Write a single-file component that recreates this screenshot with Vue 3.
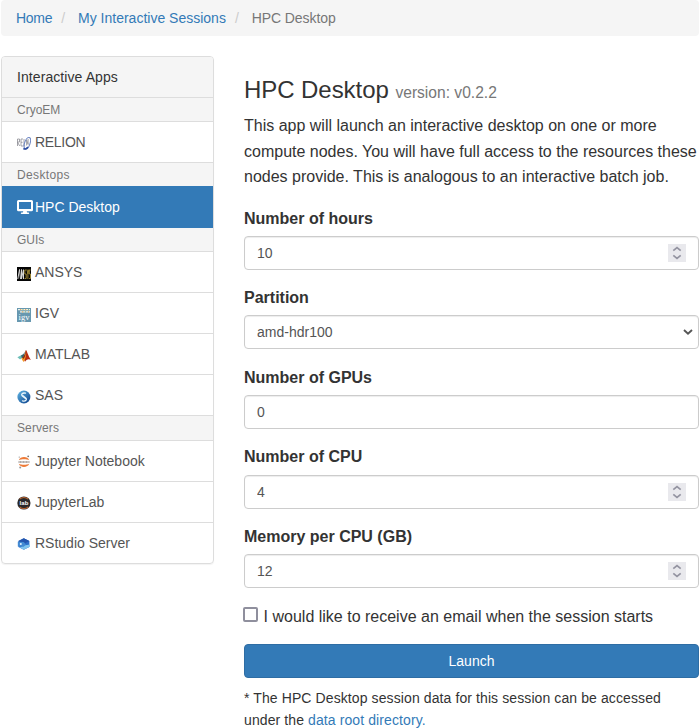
<script setup>
import { ref } from 'vue'

const groups = [
  { name: 'CryoEM', items: [{ id: 'relion', label: 'RELION' }] },
  { name: 'Desktops', items: [{ id: 'desktop', label: 'HPC Desktop', active: true }] },
  {
    name: 'GUIs',
    items: [
      { id: 'ansys', label: 'ANSYS' },
      { id: 'igv', label: 'IGV' },
      { id: 'matlab', label: 'MATLAB' },
      { id: 'sas', label: 'SAS' }
    ]
  },
  {
    name: 'Servers',
    items: [
      { id: 'jupyter', label: 'Jupyter Notebook' },
      { id: 'lab', label: 'JupyterLab' },
      { id: 'rstudio', label: 'RStudio Server' }
    ]
  }
]

const fields = ref([
  { id: 'hours', label: 'Number of hours', value: '10', control: 'spin' },
  { id: 'partition', label: 'Partition', value: 'amd-hdr100', control: 'select' },
  { id: 'gpus', label: 'Number of GPUs', value: '0', control: 'plain' },
  { id: 'cpus', label: 'Number of CPU', value: '4', control: 'spin' },
  { id: 'memory', label: 'Memory per CPU (GB)', value: '12', control: 'spin' }
])
const notify = ref(false)
</script>

<template>
  <div class="page">
    <ol class="breadcrumb">
      <li><a href="#">Home</a></li>
      <li><a href="#">My Interactive Sessions</a></li>
      <li class="current">HPC Desktop</li>
    </ol>

    <div class="columns">
      <nav class="sidebar">
        <div class="title">Interactive Apps</div>
        <template v-for="group in groups" :key="group.name">
          <p class="group" :class="group.name.toLowerCase()">{{ group.name }}</p>
          <a v-for="item in group.items" :key="item.id" href="#" class="item" :class="[item.id, { active: item.active }]">
            <svg v-if="item.id === 'relion'" class="icon raised" viewBox="0 0 14 14">
              <g fill="none" stroke="#8d8d94" stroke-width=".8">
                <path d="M.5 10V3h2v3H.5l2.200 4M4 3v7h2M4 6.300h1.600M4 3h2M7 3v7h1.200" />
                <path d="M9.600 9.500V4l1.500 4.500V3" />
              </g>
              <ellipse cx="10.300" cy="7.200" rx="2.700" ry="6" transform="rotate(19 10.300 7.200)" fill="none" stroke="#7189c4" stroke-width="1.100" />
              <path d="M6.500 12.400c1.200 1.200 3 .6 4.400-1.400" fill="none" stroke="#2b4ba0" stroke-width="1.600" />
            </svg>
            <svg v-else-if="item.id === 'desktop'" class="icon monitor" viewBox="0 0 16 14">
              <path fill="#fff" fill-rule="evenodd" d="M1.500 0h13Q16 0 16 1.500v8.200Q16 11.200 14.500 11.200H9.700l.5 1.300h1.300q.7 0 .7.750t-.7.750H4.500q-.7 0-.7-.750t.7-.750h1.300l.5-1.300H1.500Q0 11.200 0 9.700V1.500Q0 0 1.500 0zM2 2v7h12V2z" />
            </svg>
            <svg v-else-if="item.id === 'ansys'" class="icon" viewBox="0 0 14 14">
              <path fill="#050505" d="M0 0h14v14H0z" />
              <path d="M.8 12 2.500 2.500 3.500 12M4.500 12V2.500L6.500 12V2.500" fill="none" stroke="#d6d6d6" stroke-width="1" />
              <path d="M9.300 3H7.800v4h1.400v4.500H7.600M10 2.500l.9 4.500v5M11.800 2.500 11 7M13.500 3h-1.200v4h1.200v4.500h-1.400" fill="none" stroke="#a89035" stroke-width=".9" />
            </svg>
            <svg v-else-if="item.id === 'igv'" class="icon" viewBox="0 0 14 14">
              <path fill="#6798b0" d="M0 0h14v14H0z" />
              <path fill="#eef1e9" d="M1 1h12v1.300H1zM3 3.300h10v1.300H3z" />
              <path fill="#e4ad69" d="M3 1h1.200v1.300H3zM8 1h1.200v1.300H8zM5 3.300h1.200v1.300H5zM11 3.300h1v1.300h-1z" />
              <path fill="#87b58b" d="M5.500 1h1v1.300h-1zM11 1h1v1.300h-1zM8 3.300h1v1.300H8z" />
              <text x="1.500" y="11.500" font-family="Liberation Serif, serif" font-size="8.500" fill="#fff" textLength="11">igv</text>
            </svg>
            <svg v-else-if="item.id === 'matlab'" class="icon" viewBox="0 0 14 14">
              <path fill="#6dbeb8" d="m.4 8.300 3.700-2 2 1.300-3 2.800z" />
              <path fill="#37656c" d="m4.100 6.300 2.100-1.100L8 2.800 6.800 8 5 10z" />
              <path fill="#b82b12" d="M9 1c1.100 1 2 5.500 4.900 10-2-1.200-3.800-1-5.900 1.700L6.200 9C8 7.500 8.100 3 9 1z" />
              <path fill="#f39a24" d="M9 1.500C9.500 6 8.700 10 6.500 13L4.300 9.500C7.500 8.500 7.900 4.500 9 1.500z" />
              <path fill="#8c2a17" d="M9 1c-.8 2-1.100 6-3.600 7.500l1 1.400C8.500 8 8.800 4.500 9 1z" />
            </svg>
            <svg v-else-if="item.id === 'sas'" class="icon" viewBox="0 0 14 14">
              <defs>
                <linearGradient id="sas-fill" x1="0" y1="0" x2="1" y2="1">
                  <stop offset="0" stop-color="#62b8e6" />
                  <stop offset="1" stop-color="#083c87" />
                </linearGradient>
              </defs>
              <circle cx="6.900" cy="7" r="6.500" fill="url(#sas-fill)" />
              <path d="M8.500 3.200C5.400 2.400 3.700 4.500 5.300 6l2.900 2.200M5.500 10.800c3.200.9 4.900-1.400 3.200-2.900L6 5.800" fill="none" stroke="#e8f5fc" stroke-width="1.300" stroke-linecap="round" />
            </svg>
            <svg v-else-if="item.id === 'jupyter'" class="icon raised" viewBox="0 0 14 14">
              <path fill="#ee7b38" d="M1.800 5.200C3.100 1 10.900 1 12.200 5.200 9.600 3.900 4.400 3.900 1.800 5.200zM1.800 8.800c1.300 4.200 9.100 4.200 10.400 0-2.600 1.300-7.800 1.300-10.400 0z" />
              <path d="M1.500 7h11" stroke="#96908d" stroke-width="1.500" stroke-dasharray="1.200 .3" />
              <circle cx="11.200" cy="1.300" r=".9" fill="#777" />
              <circle cx="2.200" cy="2.100" r=".6" fill="#888" />
              <circle cx="3.200" cy="12.600" r="1" fill="#999" />
            </svg>
            <svg v-else-if="item.id === 'lab'" class="icon raised" viewBox="0 0 14 14">
              <circle cx="6.900" cy="7" r="6.600" fill="#29292b" />
              <path d="M2.600 3.200c2.300-2.300 6.300-2.300 8.600 0M2.600 10.800c2.300 2.300 6.300 2.300 8.600 0" fill="none" stroke="#bb642f" stroke-width="1.100" />
              <text x="2.400" y="9.100" font-family="Liberation Sans, sans-serif" font-size="6" font-weight="bold" fill="#fff" textLength="9">lab</text>
            </svg>
            <svg v-else class="icon raised" viewBox="0 0 14 14">
              <path fill="#2d6fca" d="m6.800 1.200 5.600 2.900v5.800l-5.600 2.900-5.400-2.900V4.100z" />
              <path fill="#2455ad" d="m6.800 1.200 5.600 2.900-5.600 2.900-5.400-2.900z" />
              <path fill="#80c5ee" d="m6.800 8.500 6.200-1v2l-6.200 3.300-4-2.300z" />
              <path fill="#438bd3" d="M.8 4.700 6.800 5l2 2.500-2 2.300-6-.3z" />
              <circle cx="3.800" cy="7" r="1" fill="#e9f6ff" />
            </svg>
            <span>{{ item.label }}</span>
          </a>
        </template>
      </nav>

      <main class="content">
        <h3><span>HPC Desktop</span> <small>version: v0.2.2</small></h3>
        <p class="intro">
          This app will launch an interactive desktop on one or more compute nodes. You will have full access to the
          resources these nodes provide. This is analogous to an interactive batch job.
        </p>
        <form @submit.prevent>
          <div v-for="field in fields" :key="field.id" class="field">
            <label :for="field.id">{{ field.label }}</label>
            <div class="control">
              <select v-if="field.control === 'select'" :id="field.id" v-model="field.value">
                <option>amd-hdr100</option>
              </select>
              <input v-else :id="field.id" v-model="field.value" type="text" />
              <span v-if="field.control === 'spin'" class="spinner">
                <svg viewBox="0 0 18 18">
                  <path d="M5.300 6.700 9 3.700l3.700 3M5.300 11.300l3.700 3 3.700-3" fill="none" stroke="#9494a1" stroke-width="1.700" />
                </svg>
              </span>
              <svg v-if="field.control === 'select'" class="chevron" viewBox="0 0 10 6">
                <path d="m1 1 4 3.700L9 1" fill="none" stroke="#555" stroke-width="1.900" />
              </svg>
            </div>
          </div>
          <label class="check">
            <input v-model="notify" type="checkbox" />
            <span>I would like to receive an email when the session starts</span>
          </label>
          <button type="submit">Launch</button>
        </form>
        <p class="note">
          * The HPC Desktop session data for this session can be accessed under the <a href="#">data root directory.</a>
        </p>
      </main>
    </div>
  </div>
</template>

<style>
body {
  margin: 0;
  background: #fff;
  overflow: hidden;
}
</style>

<style scoped>
* {
  box-sizing: border-box;
}
.page {
  padding-left: 1px;
  font: 16px/1.6 "Liberation Sans", Arial, sans-serif;
  color: #333;
}
a {
  color: #337ab7;
  text-decoration: none;
}
.breadcrumb {
  display: flex;
  height: 36px;
  margin: 0 0 20px;
  padding: 7px 15px;
  list-style: none;
  background: #f5f5f5;
  border-radius: 4px;
  font-size: 14px;
  line-height: 22px;
}
.breadcrumb li:first-child {
  letter-spacing: -0.3px;
}
.breadcrumb li + li::before {
  content: "/";
  padding: 0 13px 0 9px;
  color: #ccc;
}
.breadcrumb .current {
  color: #777;
  letter-spacing: -0.08px;
}
.columns {
  display: flex;
  align-items: flex-start;
  gap: 30px;
}
.sidebar {
  width: 213px;
  flex: none;
  border: 1px solid #ddd;
  border-radius: 4px;
  box-shadow: 0 1px 1px rgba(0, 0, 0, 0.05);
  overflow: hidden;
  font-size: 14px;
}
.title {
  height: 41px;
  padding-left: 15px;
  line-height: 40px;
  letter-spacing: 0.08px;
  background: #f5f5f5;
  border-bottom: 1px solid #ddd;
}
.group {
  height: 24px;
  margin: 0;
  padding-left: 15px;
  font-size: 12px;
  line-height: 25px;
  color: #777;
  background: #f5f5f5;
  border-bottom: 1px solid #ddd;
}
.group.desktops {
  letter-spacing: 0.35px;
}
.group.servers {
  height: 25px;
  letter-spacing: 0.1px;
}
.item {
  display: flex;
  align-items: center;
  height: 41px;
  padding: 0 15px 1px;
  line-height: 22px;
  color: #555;
  border-bottom: 1px solid #ddd;
}
.item.relion {
  letter-spacing: -0.3px;
}
.item:last-child {
  height: 40px;
  border-bottom: 0;
}
.item.active {
  height: 42px;
  margin-top: -1px;
  padding-top: 1px;
  padding-bottom: 0;
  color: #fff;
  background: #337ab7;
  border-color: #337ab7;
}
.icon {
  width: 14px;
  height: 14px;
  flex: none;
  margin: 4px 4px 0 0;
}
.icon.raised {
  margin-top: 2px;
}
.icon.monitor {
  width: 16px;
  margin: 0 2px 1px 0;
}
.content {
  width: 455px;
  flex: none;
}
h3 {
  margin: 21px 0 9px;
  font-size: 24px;
  line-height: 26.4px;
  font-weight: 400;
}
h3 span {
  letter-spacing: -0.06px;
}
h3 small {
  font-size: 65%;
  line-height: 1;
  color: #777;
}
.intro {
  margin: 0;
  padding: 0.8px 0 16px;
  line-height: 25.33px;
}
.field {
  margin-bottom: 15px;
}
.field label {
  display: block;
  padding-top: 0.4px;
  margin-bottom: 4.6px;
  font-weight: 700;
}
.control {
  position: relative;
}
.control input,
.control select {
  display: block;
  width: 100%;
  height: 34px;
  margin: 0;
  padding: 6px 12px;
  font: 14px/20px "Liberation Sans", Arial, sans-serif;
  color: #555;
  background: #fff;
  border: 1px solid #ccc;
  border-radius: 4px;
  box-shadow: inset 0 1px 1px rgba(0, 0, 0, 0.075);
  appearance: none;
}
.spinner {
  position: absolute;
  top: 8px;
  right: 13px;
  width: 18px;
  height: 18px;
  background: #e9e9ed;
}
.spinner svg {
  display: block;
}
.chevron {
  position: absolute;
  top: 14px;
  right: 6px;
  width: 10px;
  height: 6px;
}
.check {
  display: flex;
  padding-top: 0.6px;
  margin-bottom: 14.4px;
}
.check input {
  width: 15px;
  height: 15px;
  margin: 3.4px 5.6px 0 -1px;
  border: 2px solid #8f8f9d;
  border-radius: 2px;
  background: #fff;
  appearance: none;
}
button {
  display: block;
  width: 100%;
  height: 34px;
  padding: 0;
  font: 14px/20px "Liberation Sans", Arial, sans-serif;
  color: #fff;
  background: #337ab7;
  border: 1px solid #2e6da4;
  border-radius: 4px;
}
.note {
  margin: 9px 0 0;
  padding-right: 25px;
  font-size: 14px;
  letter-spacing: 0.1px;
}
</style>
